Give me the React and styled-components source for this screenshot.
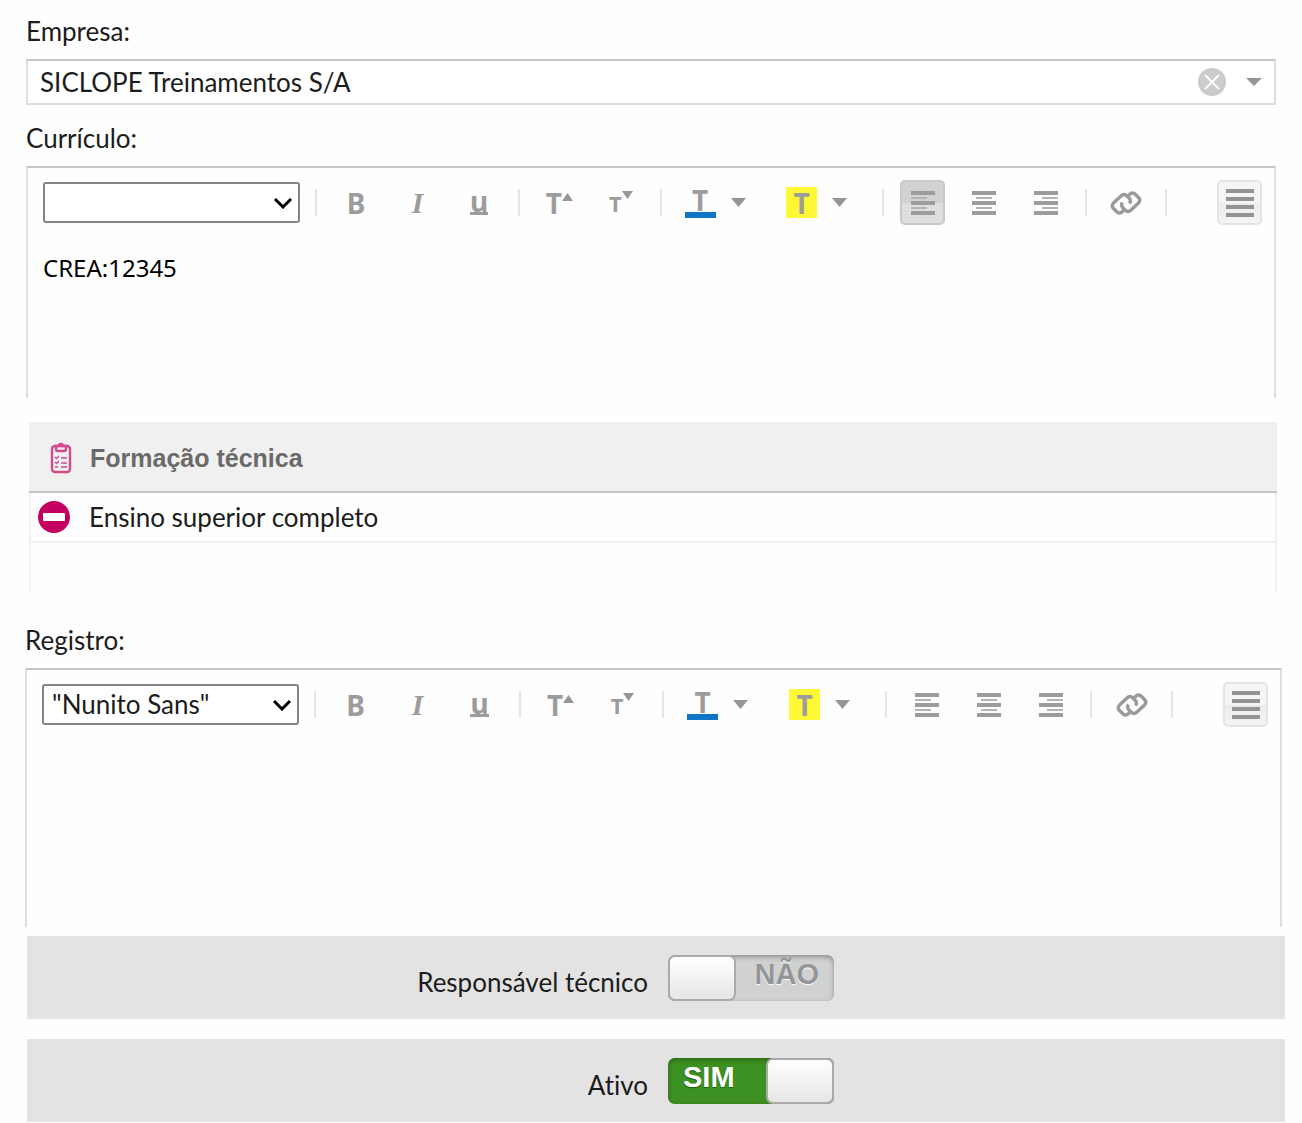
import React, { useState } from 'react';
import styled, { createGlobalStyle } from 'styled-components';

const GlobalStyle = createGlobalStyle`
    * {
        box-sizing: border-box;
    }
    body {
        margin: 0;
        background: #fefefe;
        color: #1c1c1c;
        font-family: Lato, 'Noto Sans', sans-serif;
        font-size: 26px;
        font-variant-ligatures: none;
        line-height: 32px;
    }
    button, input, select, textarea {
        margin: 0;
        font: inherit;
        color: inherit;
    }
    button {
        padding: 0;
        border: 0;
        background: none;
        cursor: pointer;
    }
    svg {
        display: block;
    }
`;

const Form = styled.form`
    display: flex;
    flex-direction: column;
    padding-top: 15px;
`;

const Section = styled.section`
    display: flex;
    flex-direction: column;
    margin-top: ${({ $top }) => $top || 0}px;
    padding: 0 ${({ $right }) => $right}px 0 ${({ $left }) => $left}px;
`;

const FieldLabel = styled.label`
    align-self: flex-start;
`;

const ComboBox = styled.div`
    display: flex;
    align-items: center;
    height: 46px;
    margin: 12px 0 17px;
    padding: 0 12px;
    border: 2px solid #dedede;
    border-top-color: #c6c6c6;
    background: #fff;
    input {
        flex: 1;
        min-width: 0;
        padding: 0;
        border: 0;
        outline: 0;
        background: none;
    }
    button {
        margin-left: 20px;
    }
`;

const EditorFrame = styled.div`
    display: flex;
    flex-direction: column;
    height: ${({ $height }) => $height}px;
    margin-top: 12px;
    border: 2px solid #dedede;
    border-top-color: #c6c6c6;
    border-bottom: 0;
`;

const Toolbar = styled.div`
    display: flex;
    align-items: center;
    padding: 12px 12px 12px 15px;
`;

const Tools = styled.div`
    display: flex;
    flex: 1;
    align-items: center;
    justify-content: space-between;
    margin: 0 50px 0 15px;
`;

const Separator = styled.span`
    width: 2px;
    height: 27px;
    background: #e6e6e6;
`;

const FontPicker = styled.div`
    position: relative;
    width: 257px;
    select {
        display: block;
        width: 100%;
        height: 41px;
        padding: 0 36px 2px 8px;
        border: 2px solid #858585;
        border-radius: 3px;
        background: #fff;
        appearance: none;
    }
    svg {
        position: absolute;
        top: 15px;
        right: 8px;
        pointer-events: none;
    }
`;

const ToolButton = styled.button`
    display: flex;
    align-items: center;
    justify-content: center;
    width: 45px;
    height: 45px;
    border-radius: 5px;
    color: #9c9c9c;
    ${({ $pressed }) => $pressed && `
        border: 2px solid #c9c9c9;
        background: linear-gradient(#d2d2d2 50%, #dedede 50%);
    `}
    ${({ $raised }) => $raised && `
        border: 2px solid #e4e4e4;
        background: linear-gradient(#f6f6f6 50%, #ececec 50%, #f4f4f4);
    `}
`;

const ColorButton = styled(ToolButton)`
    justify-content: flex-start;
    gap: 15px;
    width: 85px;
    padding-left: 6px;
`;

const Glyph = styled.span`
    font-family: 'Noto Sans', sans-serif;
    font-size: ${({ $small }) => ($small ? 22 : 28)}px;
    font-weight: 700;
    line-height: 26px;
`;

const ItalicGlyph = styled(Glyph)`
    font-family: 'Liberation Serif', serif;
    font-size: 30px;
    font-style: italic;
`;

const UnderlineGlyph = styled(Glyph)`
    height: 24px;
    border-bottom: 3px solid #9c9c9c;
    line-height: 20px;
`;

const SizeGlyph = styled.span`
    display: flex;
    align-items: ${({ $small }) => ($small ? 'flex-end' : 'center')};
    svg {
        align-self: flex-start;
        margin-top: ${({ $small }) => ($small ? 1 : 3)}px;
    }
`;

const TextColor = styled.span`
    display: flex;
    justify-content: center;
    width: 31px;
    height: 31px;
    border-bottom: 6px solid #0f76c7;
    line-height: 26px;
`;

const Highlight = styled(TextColor)`
    align-items: center;
    border: 0;
    background: #fff835;
`;

const EditorText = styled.textarea`
    flex: 1;
    min-height: 0;
    padding: 15px;
    border: 0;
    outline: 0;
    background: none;
    color: #000;
    font-family: 'Noto Sans', sans-serif;
    font-size: 24px;
    resize: none;
`;

const PanelHeader = styled.header`
    display: flex;
    align-items: center;
    gap: 18px;
    height: 71px;
    padding: 2px 21px 0;
    border-bottom: 2px solid #c6c6c6;
    background: #f0f0f0;
    h2 {
        margin: 0;
        color: #6a6a6a;
        font-family: 'Liberation Sans', Arial, sans-serif;
        font-size: 25px;
    }
`;

const PanelList = styled.ul`
    height: 100px;
    margin: 0;
    padding: 0;
    border: solid #f0f0f0;
    border-width: 0 2px;
    list-style: none;
    li {
        display: flex;
        align-items: center;
        gap: 19px;
        height: 50px;
        padding: 0 7px;
        border-bottom: 2px solid #f0f0f0;
    }
`;

const ToggleRow = styled.div`
    display: grid;
    grid-template-columns: 1fr 1fr;
    gap: 20px;
    align-items: center;
    height: 83px;
    margin-bottom: 20px;
    padding-left: 4px;
    background: #e3e3e3;
    &:last-child {
        margin-bottom: 0;
    }
    > label {
        justify-self: end;
        padding-top: 8px;
    }
`;

const Switch = styled.div`
    position: relative;
    display: flex;
    width: 166px;
    height: 46px;
    flex-direction: ${({ $on }) => ($on ? 'row-reverse' : 'row')};
    border-radius: 7px;
    background: ${({ $on }) => ($on ? '#3d9022' : '#d0d2d1')};
    box-shadow: inset 0 2px 5px ${({ $on }) => ($on ? '#2b6a16' : '#8c8c8c')};
    input {
        position: absolute;
        inset: 0;
        width: 100%;
        height: 100%;
        opacity: 0;
        cursor: pointer;
    }
`;

const Knob = styled.span`
    width: 68px;
    border: 2px solid #aaa;
    border-radius: 7px;
    background: linear-gradient(#fff, #e6e6e6);
`;

const SwitchText = styled.span`
    flex: 1;
    padding: 0 15px;
    color: ${({ $on }) => ($on ? '#fff' : '#939598')};
    font-family: 'Liberation Sans', Arial, sans-serif;
    font-size: 29px;
    font-weight: 700;
    line-height: 38px;
    text-align: ${({ $on }) => ($on ? 'left' : 'right')};
    text-shadow: 0 1px 1px ${({ $on }) => ($on ? '#1f5a0e' : '#fff')};
`;

const Caret = ({ up, width = 15, height = 9 }) => (
    <svg width={width} height={height} viewBox="0 0 10 6" preserveAspectRatio="none" fill="#969696">
        <path d={up ? 'M0 6 5 0l5 6z' : 'M0 0h10L5 6z'} />
    </svg>
);

const Chevron = _ => (
    <svg width="18" height="12" viewBox="0 0 18 12" fill="none" stroke="#000" strokeWidth="3">
        <path d="M1 2l8 8 8-8" />
    </svg>
);

const ClearIcon = _ => (
    <svg width="28" height="28" viewBox="0 0 28 28">
        <circle cx="14" cy="14" r="14" fill="#ccc" />
        <path d="M7 7l14 14M21 7 7 21" stroke="#fff" strokeWidth="2" />
    </svg>
);

const alignStart = { left: 0, center: 4, right: 8 };

const AlignIcon = ({ align }) => (
    <svg width="24" height="24" viewBox="0 0 24 24">
        <path d="M0 2h24M0 12h24M0 22h24" stroke="#9c9c9c" strokeWidth="4" />
        <path d={`M${alignStart[align]} 7h16m-16 10h16`} stroke="#b4b4b4" strokeWidth="2" />
    </svg>
);

const MenuIcon = _ => (
    <svg width="28" height="28" viewBox="0 0 28 28" stroke="#949494" strokeWidth="4">
        <path d="M0 2h28M0 10h28M0 18h28M0 26h28" />
    </svg>
);

const LinkIcon = _ => (
    <svg width="32" height="24" viewBox="0 0 32 24" fill="none" stroke="#9a9a9a" strokeWidth="3.4">
        <path d="M15 18l-3 3q-3 2-5.500-.5l-3-3q-2.500-2.500 0-5.500L11 5q3-3 6 0l2 2q2.500 2.500.5 5.500" />
        <path d="M17 6l3-3q3-2 5.500.5l3 3q2.500 2.500 0 5.500L21 19q-3 3-6 0l-2-2q-2.500-2.500-.5-5.500" />
    </svg>
);

const ClipboardIcon = _ => (
    <svg width="22" height="32" viewBox="0 0 22 32" fill="none" stroke="#d14a8c" strokeWidth="2.4">
        <rect x="2" y="4" width="18" height="26" rx="3" />
        <path d="M6 4v3q0 2 2 2h6q2 0 2-2V4h-3q0-2-2-2T9 4z" />
        <path d="M5 15l1.500 1.500L9 14M5 20l1.500 1.500L9 19M5 25h3M11 16h6M11 21h6M11 25h6" strokeWidth="1.500" />
    </svg>
);

const RemoveIcon = _ => (
    <svg width="32" height="32" viewBox="0 0 32 32">
        <circle cx="16" cy="16" r="16" fill="#c3005f" />
        <rect x="5" y="12" width="22" height="8" rx="1" fill="#fff" />
    </svg>
);

const Editor = ({ id, fonts, initialText, initialAlign, height }) => {
    const [text, setText] = useState(initialText);
    const [align, setAlign] = useState(initialAlign);

    return (
        <EditorFrame $height={height}>
            <Toolbar>
                <FontPicker>
                    <select aria-label="Fonte">
                        {fonts.map(font => <option key={font}>{font}</option>)}
                    </select>
                    <Chevron />
                </FontPicker>
                <Tools>
                    <Separator />
                    <ToolButton type="button" aria-label="Negrito"><Glyph>B</Glyph></ToolButton>
                    <ToolButton type="button" aria-label="Itálico"><ItalicGlyph>I</ItalicGlyph></ToolButton>
                    <ToolButton type="button" aria-label="Sublinhado"><UnderlineGlyph>u</UnderlineGlyph></ToolButton>
                    <Separator />
                    <ToolButton type="button" aria-label="Aumentar texto">
                        <SizeGlyph><Glyph>T</Glyph><Caret up width={11} height={8} /></SizeGlyph>
                    </ToolButton>
                    <ToolButton type="button" aria-label="Diminuir texto">
                        <SizeGlyph $small><Glyph $small>T</Glyph><Caret width={11} height={8} /></SizeGlyph>
                    </ToolButton>
                    <Separator />
                    <ColorButton type="button" aria-label="Cor do texto">
                        <TextColor><Glyph>T</Glyph></TextColor>
                        <Caret />
                    </ColorButton>
                    <ColorButton type="button" aria-label="Cor de fundo">
                        <Highlight><Glyph>T</Glyph></Highlight>
                        <Caret />
                    </ColorButton>
                    <Separator />
                    {Object.keys(alignStart).map(side => (
                        <ToolButton
                            key={side}
                            type="button"
                            aria-label={side}
                            aria-pressed={align === side}
                            $pressed={align === side}
                            onClick={() => setAlign(side)}
                        >
                            <AlignIcon align={side} />
                        </ToolButton>
                    ))}
                    <Separator />
                    <ToolButton type="button" aria-label="Link"><LinkIcon /></ToolButton>
                    <Separator />
                </Tools>
                <ToolButton type="button" aria-label="Menu" $raised><MenuIcon /></ToolButton>
            </Toolbar>
            <EditorText id={id} value={text} onChange={e => setText(e.target.value)} />
        </EditorFrame>
    );
};

const Toggle = ({ id, label, initial }) => {
    const [on, setOn] = useState(initial);

    return (
        <ToggleRow>
            <label htmlFor={id}>{label}</label>
            <Switch $on={on}>
                <Knob />
                <SwitchText $on={on}>{on ? 'SIM' : 'NÃO'}</SwitchText>
                <input id={id} type="checkbox" role="switch" checked={on} onChange={e => setOn(e.target.checked)} />
            </Switch>
        </ToggleRow>
    );
};

const App = _ => {
    const [company, setCompany] = useState('SICLOPE Treinamentos S/A');

    return (
        <Form>
            <GlobalStyle />
            <Section $left={26} $right={26}>
                <FieldLabel htmlFor="empresa">Empresa:</FieldLabel>
                <ComboBox>
                    <input id="empresa" value={company} onChange={e => setCompany(e.target.value)} />
                    <button type="button" aria-label="Limpar" onClick={() => setCompany('')}><ClearIcon /></button>
                    <button type="button" aria-label="Abrir lista"><Caret width={16} height={8} /></button>
                </ComboBox>
                <FieldLabel htmlFor="curriculo">Currículo:</FieldLabel>
                <Editor id="curriculo" fonts={['', 'Nunito Sans']} initialText="CREA:12345" initialAlign="left" height={232} />
            </Section>
            <Section $top={24} $left={29} $right={25}>
                <PanelHeader>
                    <ClipboardIcon />
                    <h2>Formação técnica</h2>
                </PanelHeader>
                <PanelList>
                    <li>
                        <button type="button" aria-label="Remover"><RemoveIcon /></button>
                        Ensino superior completo
                    </li>
                </PanelList>
            </Section>
            <Section $top={31} $left={25} $right={20}>
                <FieldLabel htmlFor="registro">Registro:</FieldLabel>
                <Editor id="registro" fonts={['"Nunito Sans"']} initialText="" height={259} />
            </Section>
            <Section $top={9} $left={27} $right={17}>
                <Toggle id="responsavel" label="Responsável técnico" initial={false} />
                <Toggle id="ativo" label="Ativo" initial />
            </Section>
        </Form>
    );
};

export default App;
